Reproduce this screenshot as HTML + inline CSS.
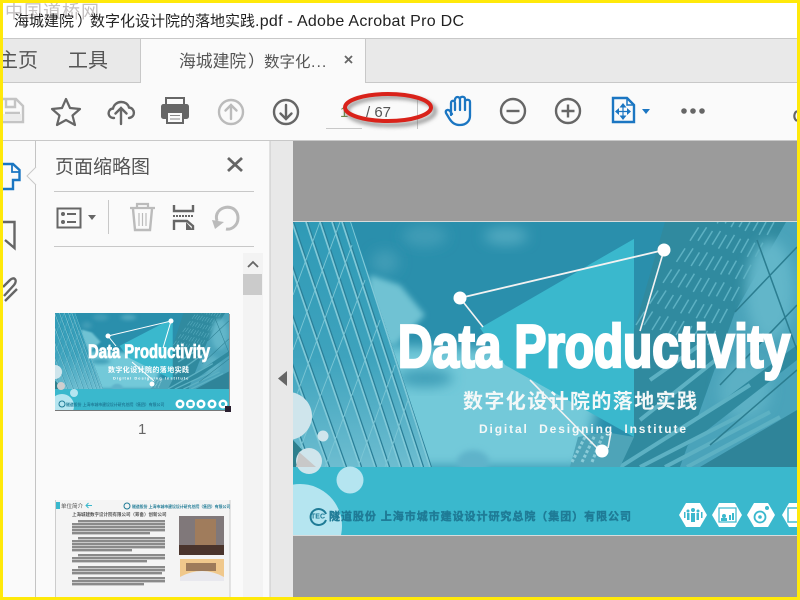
<!DOCTYPE html>
<html><head><meta charset="utf-8"><style>
html,body{margin:0;padding:0;width:800px;height:600px;overflow:hidden;background:#fafafa}
svg{display:block}
text{font-family:"Liberation Sans","Noto Sans CJK SC",sans-serif}
</style></head><body>
<svg width="800" height="600" viewBox="0 0 800 600" xmlns="http://www.w3.org/2000/svg">
<defs>
<filter id="b3" x="-50%" y="-50%" width="200%" height="200%"><feGaussianBlur stdDeviation="3"/></filter>
<filter id="b6" x="-50%" y="-50%" width="200%" height="200%"><feGaussianBlur stdDeviation="6"/></filter>
<filter id="b12" x="-50%" y="-50%" width="200%" height="200%"><feGaussianBlur stdDeviation="12"/></filter>
<filter id="sh" x="-20%" y="-50%" width="140%" height="200%"><feGaussianBlur stdDeviation="2"/></filter>
<linearGradient id="bld" x1="0" y1="0" x2="0" y2="1"><stop offset="0" stop-color="#2f9ab6"/><stop offset=".55" stop-color="#3ea3bd"/><stop offset="1" stop-color="#6dbdd0"/></linearGradient>
<clipPath id="slide"><rect x="293" y="222" width="504" height="313"/></clipPath>
<clipPath id="photo"><rect x="293" y="222" width="504" height="245"/></clipPath>
<clipPath id="bclip"><path d="M293 222H351L432 467H293Z"/></clipPath>
<clipPath id="thumb"><rect x="55" y="313" width="174" height="97"/></clipPath>
</defs>

<rect width="800" height="600" fill="#fafafa"/>
<!-- title -->
<rect x="0" y="0" width="800" height="39" fill="#fff"/>
<text x="5" y="18" font-size="18" fill="#c4c0c0" letter-spacing="1">中国道桥网</text>
<text x="14" y="26" font-size="15" fill="#222">海城建院</text>
<text x="77" y="26" font-size="15" fill="#222">）</text>
<text x="90" y="26" font-size="15" fill="#222">数字化设计院的落地实践</text>
<text x="255" y="26" font-size="16" fill="#222" textLength="209" lengthAdjust="spacing">.pdf - Adobe Acrobat Pro DC</text>
<!-- tabs -->
<rect x="0" y="38" width="800" height="45" fill="#e9e9e9"/>
<rect x="0" y="38" width="800" height="1" fill="#c8c8c8"/>
<rect x="0" y="82" width="800" height="1" fill="#c8c8c8"/>
<rect x="140" y="38" width="226" height="45" fill="#fafafa"/>
<rect x="140" y="38" width="1" height="45" fill="#c8c8c8"/>
<rect x="365" y="38" width="1" height="45" fill="#c8c8c8"/>
<rect x="140" y="38" width="226" height="1" fill="#c8c8c8"/>
<text x="-2" y="67" font-size="20" fill="#555">主页</text>
<text x="68" y="67" font-size="20" fill="#555">工具</text>
<text x="179" y="67" font-size="16.800" fill="#555">海城建院</text>
<text x="248" y="67" font-size="16.800" fill="#555">）</text>
<text x="264" y="67" font-size="15.500" fill="#555">数字化</text>
<text x="311" y="67" font-size="16" fill="#555" letter-spacing="1">...</text>
<path d="M345 56l7 7M352 56l-7 7" stroke="#666" stroke-width="1.800" fill="none"/>

<!-- toolbar -->
<g fill="none" stroke="#c4c4c4" stroke-width="2.400">
<path d="M3 99H16L23 106V122H3"/><path d="M6 100V107H15V100M5 113H20"/>
</g>
<rect x="3" y="114" width="18" height="7" fill="#ececec"/>
<path d="M66 99L70 108L80 109L72.500 115.500L75 125L66 120L57 125L59.500 115.500L52 109L62 108Z" fill="none" stroke="#666" stroke-width="2.200" stroke-linejoin="round"/>
<path d="M114 118C107 118 107 109 113 108.500C115 100 127 100 129 107.500C135 108 136 117 129 118" fill="none" stroke="#666" stroke-width="2.400" stroke-linecap="round"/>
<path d="M121 124V108M115.500 113.500L121 108L126.500 113.500" fill="none" stroke="#666" stroke-width="2.400" stroke-linecap="round"/>
<path d="M166 98H184V105H166Z" fill="none" stroke="#666" stroke-width="2"/>
<rect x="161" y="104" width="28" height="15" rx="2.500" fill="#666"/>
<rect x="167" y="112" width="16" height="11" fill="#fafafa" stroke="#666" stroke-width="2"/>
<path d="M170 115.500H180M170 119H180" stroke="#888" stroke-width="1"/>
<g fill="none" stroke="#bbb" stroke-width="2.400" stroke-linecap="round"><circle cx="231" cy="112" r="12"/><path d="M231 119V105M225.500 110.500L231 105L236.500 110.500"/></g>
<g fill="none" stroke="#666" stroke-width="2.400" stroke-linecap="round"><circle cx="286" cy="112" r="12"/><path d="M286 105V119M280.500 113.500L286 119L291.500 113.500"/></g>
<text x="340" y="117" font-size="15" fill="#6b8a4a">1</text>
<rect x="326" y="128" width="36" height="1" fill="#c8c8c8"/>
<text x="366" y="117" font-size="15" fill="#555">/ 67</text>
<rect x="417" y="97" width="1" height="32" fill="#c4c4c4"/>
<ellipse cx="391" cy="111" rx="44" ry="14" fill="none" stroke="#777" stroke-width="3" filter="url(#sh)"/>
<ellipse cx="388" cy="107.500" rx="43" ry="13.500" fill="none" stroke="#d9221a" stroke-width="4"/>
<path d="M451 115V103C451 100 455 100 455 103V110M455 100C455 96 460 96 460 100V110M460 99C460 96 465 96 465 99V110M465 102C465 99 470 99 470 102V116C470 121 466 125 460 125C455 125 452 123 449 118L446 113C445 110 448 109 450 111L452 114" fill="none" stroke="#1b76c2" stroke-width="2.300" stroke-linecap="round" stroke-linejoin="round"/>
<g fill="none" stroke="#666" stroke-width="2.400"><circle cx="513" cy="111" r="12"/><path d="M506.500 111H519.500"/><circle cx="568" cy="111" r="12"/><path d="M561.500 111H574.500M568 104.500V117.500"/></g>
<path d="M613 98H627L634 105V122H613Z" fill="none" stroke="#1b76c2" stroke-width="2.400"/>
<path d="M627 98V105H634" fill="none" stroke="#1b76c2" stroke-width="1.500"/>
<path d="M623 103L619.500 107.500H626.500ZM623 120L619.500 115.500H626.500ZM615 111.500L619 108V115ZM631 111.500L627 108V115Z" fill="#1b76c2"/>
<path d="M623 106V117M617 111.500H629" stroke="#1b76c2" stroke-width="1.200"/>
<path d="M642 109H650L646 114Z" fill="#1b76c2"/>
<circle cx="684" cy="111" r="2.800" fill="#666"/><circle cx="693" cy="111" r="2.800" fill="#666"/><circle cx="702" cy="111" r="2.800" fill="#666"/>
<path d="M797 111A6 6 0 0 0 797 121" fill="none" stroke="#666" stroke-width="2.200"/>

<rect x="0" y="140" width="800" height="1" fill="#c8c8c8"/>

<!-- left nav and panel -->
<rect x="35" y="141" width="1" height="459" fill="#c4c4c4"/>
<path d="M36 167L27 176L36 185" fill="#fafafa" stroke="#c8c8c8" stroke-width="1"/>
<rect x="36" y="168" width="1" height="16" fill="#fafafa"/>
<path d="M3 164H13L19.500 170V180H13V189H3" fill="none" stroke="#1b76c2" stroke-width="2.400"/>
<path d="M12 164V172H19" fill="none" stroke="#1b76c2" stroke-width="1.800"/>
<path d="M3 222H14.500V248L5 240" fill="none" stroke="#666" stroke-width="2.400"/>
<path d="M4 296L14 285C18 280 14 276 10 280L3 287M5 301L17 289" fill="none" stroke="#666" stroke-width="2.400"/>

<text x="55" y="173" font-size="19" fill="#555">页面缩略图</text>
<path d="M228 158L242 171M242 158L228 171" stroke="#666" stroke-width="2.800" fill="none"/>
<rect x="54" y="191" width="200" height="1" fill="#c8c8c8"/>
<rect x="54" y="246" width="200" height="1" fill="#c8c8c8"/>
<rect x="57.500" y="208.500" width="23" height="19" fill="none" stroke="#666" stroke-width="2"/>
<circle cx="63" cy="214" r="2" fill="#666"/><circle cx="63" cy="222" r="2" fill="#666"/>
<path d="M67 214H76M67 222H76" stroke="#666" stroke-width="2"/>
<path d="M88 215H96L92 220Z" fill="#666"/>
<rect x="108" y="200" width="1" height="34" fill="#c8c8c8"/>
<path d="M130 208H155M137 208V204H148V208" fill="none" stroke="#bbb" stroke-width="2.200"/>
<path d="M133 209L135 230H150L152 209" fill="none" stroke="#bbb" stroke-width="2.400"/>
<path d="M139 213V226M142.500 213V226M146 213V226" stroke="#bbb" stroke-width="1.200"/>
<path d="M174 205V211H193V205" fill="none" stroke="#666" stroke-width="2.400"/>
<path d="M173 216H194" stroke="#666" stroke-width="2" stroke-dasharray="2 1"/>
<path d="M174 230V221H187L193 226V230" fill="none" stroke="#666" stroke-width="2.400"/>
<path d="M186 222L193 230H186Z" fill="#666"/>
<path d="M218 212C224 204 238 206 238 218C238 226 231 230 226 229" fill="none" stroke="#bbb" stroke-width="3"/>
<path d="M218 212C216 215 216 218 217 221" fill="none" stroke="#bbb" stroke-width="3"/>
<path d="M212 220L224 222L215 229Z" fill="#bbb"/>

<!-- scrollbar -->
<rect x="243" y="253" width="20" height="347" fill="#f3f3f3"/>
<rect x="243" y="274" width="19" height="21" fill="#cbcbcb"/>
<path d="M248 267L253 262L258 267" fill="none" stroke="#666" stroke-width="1.800"/>

<!-- thumbnail 1 -->
<rect x="56" y="314" width="174" height="97" fill="#999"/>
<g clip-path="url(#thumb)">
<rect x="55" y="313" width="174" height="97" fill="#3ab8cd"/>
<use href="#art" transform="translate(55,313) scale(.3452,.3102) translate(-293,-222)"/>
<path d="M108 336L171 321L163 348M108 336L116 346M154 381L132 362" stroke="#fff" stroke-width="1" fill="none"/>
<circle cx="108" cy="336" r="2.500" fill="#fff"/><circle cx="171" cy="321" r="2.500" fill="#fff"/><circle cx="152" cy="384" r="2.500" fill="#fff"/>
<text x="88" y="358" font-size="19" font-weight="bold" fill="#fff" stroke="#fff" stroke-width=".8" textLength="122" lengthAdjust="spacingAndGlyphs">Data Productivity</text>
<text x="108" y="372" font-size="7" font-weight="bold" fill="#fff" letter-spacing=".4">数字化设计院的落地实践</text>
<text x="113" y="379.500" font-size="4" font-weight="bold" fill="#fff" letter-spacing="1">Digital Designing Institute</text>
<circle cx="55" cy="372" r="7" fill="#cfe5ec"/><circle cx="61" cy="386" r="4" fill="#cfcfcf"/><circle cx="74" cy="393" r="4" fill="#b5e5f0"/><circle cx="62" cy="406" r="12" fill="#b5e5f0"/>
<circle cx="62" cy="404" r="3" fill="none" stroke="#1f7b96"/>
<text x="66" y="406" font-size="3.900" font-weight="bold" fill="#1f7b96">隧道股份 上海市城市建设设计研究总院（集团）有限公司</text>
<g fill="#fff"><circle cx="180" cy="404" r="4.500"/><circle cx="190.500" cy="404" r="4.500"/><circle cx="201" cy="404" r="4.500"/><circle cx="212" cy="404" r="4.500"/><circle cx="223" cy="404" r="4.500"/></g>
<g fill="#3ab8cd"><circle cx="180" cy="404" r="2"/><rect x="188.500" y="402" width="4" height="4"/><circle cx="201" cy="404" r="2"/><circle cx="212" cy="404" r="2"/><circle cx="223" cy="404" r="2"/></g>
</g>
<rect x="55" y="410" width="174" height="1" fill="#777"/>
<rect x="225" y="406" width="6" height="6" fill="#2a2030"/>
<text x="138" y="434" font-size="15" fill="#666">1</text>

<!-- thumbnail 2 -->
<rect x="55" y="500" width="175" height="97" fill="#f4f4f4"/>
<rect x="229.500" y="500" width="1" height="97" fill="#ccc"/><rect x="55" y="500" width="1" height="97" fill="#ccc"/>
<rect x="56" y="502" width="4" height="7" fill="#3ab8cd"/>
<text x="61" y="508" font-size="5.500" fill="#555">单位简介</text>
<path d="M92 505.500H86M88.500 503L86 505.500L88.500 508" stroke="#3ab8cd" stroke-width="1" fill="none"/>
<circle cx="127" cy="506" r="3" fill="none" stroke="#1f7b96"/>
<text x="132" y="508" font-size="3.900" font-weight="bold" fill="#1f7b96">隧道股份 上海市城市建设设计研究总院（集团）有限公司</text>
<text x="72" y="516" font-size="4.500" font-weight="bold" fill="#555">上海城建数字设计院有限公司（筹备）创新公司</text>
<g fill="#8a8a8a">
<rect x="78" y="520" width="87" height="2.400"/><rect x="72" y="523" width="93" height="2.400"/><rect x="72" y="526" width="93" height="2.400"/><rect x="72" y="529" width="93" height="2.400"/><rect x="72" y="532" width="78" height="2.400"/>
<rect x="78" y="537" width="87" height="2.400"/><rect x="72" y="540" width="93" height="2.400"/><rect x="72" y="543" width="93" height="2.400"/><rect x="72" y="546" width="93" height="2.400"/><rect x="72" y="549" width="60" height="2.400"/>
<rect x="78" y="554" width="87" height="2.400"/><rect x="72" y="557" width="93" height="2.400"/><rect x="72" y="560" width="75" height="2.400"/>
<rect x="78" y="566" width="87" height="2.400"/><rect x="72" y="569" width="93" height="2.400"/><rect x="72" y="572" width="90" height="2.400"/>
<rect x="78" y="577" width="87" height="2.400"/><rect x="72" y="580" width="93" height="2.400"/><rect x="72" y="583" width="72" height="2.400"/>
</g>
<rect x="179" y="516" width="45" height="39" fill="#80787a"/>
<rect x="195" y="519" width="21" height="30" fill="#a07c5c"/>
<rect x="179" y="545" width="45" height="10" fill="#4a342c"/>
<rect x="180" y="559" width="44" height="22" fill="#f0c88c"/>
<path d="M180 577Q202 565 224 577V581H180Z" fill="#e8e8ee"/>
<path d="M186 563H216V571H186Z" fill="#7a5a44" opacity=".7"/>

<!-- gutter and page area -->
<rect x="270" y="141" width="23" height="459" fill="#e8e8e8"/>
<rect x="269.500" y="141" width="1" height="459" fill="#c8c8c8"/>
<path d="M287 371L278 378.500L287 386Z" fill="#666"/>
<rect x="293" y="141" width="507" height="459" fill="#9b9b9b"/>

<!-- slide -->
<rect x="293" y="221" width="504" height="315" fill="#d8dcdc"/>
<g clip-path="url(#slide)">
<rect x="293" y="222" width="504" height="245" fill="#3ab8cd"/>
<g id="art" clip-path="url(#photo)">
<rect x="293" y="222" width="504" height="245" fill="#2a8fac"/>
<!-- clouds -->
<ellipse cx="425" cy="236" rx="22" ry="11" fill="#3f9cb6" filter="url(#b6)"/>
<ellipse cx="506" cy="236" rx="22" ry="9" fill="#50a8bf" filter="url(#b6)"/>
<ellipse cx="385" cy="262" rx="14" ry="12" fill="#3f9cb6" filter="url(#b6)"/>
<path d="M370 275L400 285L425 315L395 345L365 340Z" fill="#6fc2d3" filter="url(#b3)"/>
<path d="M360 345L520 350L600 400L580 467H400Z" fill="#73c9d9" filter="url(#b6)"/>
<ellipse cx="425" cy="378" rx="28" ry="9" fill="#3f9fb8" filter="url(#b6)"/>
<ellipse cx="473" cy="462" rx="16" ry="12" fill="#5fb3ca" filter="url(#b3)"/>
<!-- left building -->
<path d="M293 222H351L432 467H293Z" fill="url(#bld)"/>
<g clip-path="url(#bclip)">
<g stroke="#2a7f98" stroke-width="1.400" fill="none" transform="translate(1.500,0)">
<path d="M351 222L430 467M342 222L422 467M332 222L412 467M320 222L400 467M306 222L388 467M292 222L375 467M276 222L360 467M258 222L345 467M240 222L328 467M220 222L310 467M198 222L290 467M175 222L270 467"/>
</g>
<g stroke="#80c9d8" stroke-width="1.700" fill="none">
<path d="M351 222L430 467M342 222L422 467M332 222L412 467M320 222L400 467M306 222L388 467M292 222L375 467M276 222L360 467M258 222L345 467M240 222L328 467M220 222L310 467M198 222L290 467M175 222L270 467"/>
</g>
<g stroke="#7cc6d5" stroke-width=".9" fill="none">
<path d="M320 222L293 295M340 222L293 350M352 245L293 405M365 280L293 467M380 320L325 467M395 365L358 467M408 400L385 467"/>
</g>
</g>
<path d="M293 440L318 467H293Z" fill="#2e7f8d"/>
<!-- right building -->
<path d="M665 222H786L735 312L680 467H590L634 437V330Z" fill="#308a9f"/>
<path d="M786 222H797V467H680L735 312Z" fill="#4aa3ba"/>
<ellipse cx="770" cy="290" rx="24" ry="50" fill="#62b6c9" filter="url(#b6)"/>
<ellipse cx="745" cy="390" rx="26" ry="30" fill="#5bb0c4" filter="url(#b6)"/>
<path d="M700 467L797 410V467Z" fill="#2f8499"/>
<path d="M634 467L797 345V360L660 467Z" fill="#308a9f"/>
<g stroke="#5db1c3" stroke-width="1.500" fill="none" stroke-dasharray="16 9">
<path d="M636 325L702 222M644 325L710 222M652 330L718 222M660 330L726 222M668 335L734 222M676 335L742 222M684 340L750 222M692 340L758 222M700 345L766 222M708 345L774 222"/>
</g>
<g stroke="#5db1c3" stroke-width="4" fill="none">
<path d="M620 467L750 385M640 467L757 407M665 467L770 412M687 467L780 417M640 420L722 355M650 380L700 345"/>
</g>
<g stroke="#2b7d90" stroke-width="1.500" fill="none">
<path d="M757 240L797 350M797 247L735 312M797 305L720 385M797 370L710 445"/>
</g>
<path d="M634 239L480 328L505 365L634 437Z" fill="#3ab8cd"/>
<path d="M570 467L578 437L605 432L634 437L620 467Z" fill="#4ea4b8"/>
<path d="M572 462L585 437M582 462L595 435M592 462L603 435" stroke="#8acbd8" stroke-width="3" stroke-dasharray="3 2" fill="none"/>
</g>
<path d="M460 298L664 250" stroke="#f2f2f2" stroke-width="1.800"/>
<path d="M634 239L587 266L634 255Z" fill="#3ab8cd"/>
<path d="M664 250L640 331M460 298L483 327M600 451L530 380M608 448L611 432" stroke="#f2f2f2" stroke-width="1.600" fill="none"/>
<circle cx="460" cy="298" r="6.500" fill="#fff"/><circle cx="664" cy="250" r="6.500" fill="#fff"/><circle cx="602" cy="451" r="6.500" fill="#fff"/>
<text x="398" y="367" font-size="60" font-weight="bold" fill="#fff" stroke="#fff" stroke-width="2.800" textLength="392" lengthAdjust="spacingAndGlyphs">Data Productivity</text>
<text x="463" y="408" font-size="20" font-weight="bold" fill="#f4f8f8" letter-spacing="1.400">数字化设计院的落地实践</text>
<text x="479" y="433" font-size="12" font-weight="bold" fill="#f4f8f8" textLength="207" xml:space="preserve">Digital  Designing  Institute</text>
<rect x="293" y="467" width="504" height="68" fill="#3ab8cd"/>
<circle cx="288" cy="416" r="24" fill="#cfe5ec"/>
<circle cx="323" cy="436" r="5.500" fill="#cfe5ec"/>
<circle cx="309" cy="461" r="13" fill="#cfe5ec"/>
<path d="M299 452L316 467L296 467Z" fill="#c8c8c8"/>
<circle cx="350" cy="480" r="13.500" fill="#b5e5f0"/>
<circle cx="300" cy="526" r="42" fill="#b5e5f0"/>
<path d="M326 514A8 8 0 1 0 326 520" fill="none" stroke="#1f7b96" stroke-width="2"/>
<text x="311" y="518.500" font-size="7" font-weight="bold" fill="#1f7b96">TEC</text>
<text x="329" y="520" font-size="11" font-weight="bold" fill="#1f7b96" stroke="#1f7b96" stroke-width=".4" textLength="302">隧道股份 上海市城市建设设计研究总院（集团）有限公司</text>
<g fill="#fff">
<path d="M679 515L686 503H700L707 515L700 527H686Z"/>
<path d="M712 515L719 503H735L742 515L735 527H719Z"/>
<path d="M747 515L754 503H768L775 515L768 527H754Z"/>
<path d="M782 515L789 503H805L812 515L805 527H789Z"/>
</g>
<g fill="#3ab8cd">
<circle cx="693" cy="510" r="2"/><rect x="691" y="513" width="4" height="9"/><circle cx="688" cy="511" r="1.500"/><rect x="687" y="513" width="2.500" height="7"/><circle cx="698" cy="511" r="1.500"/><rect x="696.500" y="513" width="2.500" height="7"/><rect x="684" y="512" width="1.500" height="6"/><rect x="701" y="512" width="1.500" height="6"/>
<rect x="719" y="508" width="17" height="14" fill="none" stroke="#3ab8cd" stroke-width="1.200"/><circle cx="724" cy="516" r="2"/><rect x="721" y="518" width="6" height="3"/><rect x="729" y="515" width="2" height="5"/><rect x="732" y="513" width="2" height="7"/>
<circle cx="760" cy="517" r="5.500" fill="none" stroke="#3ab8cd" stroke-width="1.800"/><circle cx="760" cy="517" r="1.800"/><circle cx="767" cy="508" r="2"/>
<rect x="788" y="508" width="10" height="14" fill="none" stroke="#3ab8cd" stroke-width="1.400"/>
</g>
</g>

<!-- yellow frame -->
<rect x="0" y="0" width="800" height="3" fill="#ffe90a"/>
<rect x="0" y="597" width="800" height="3" fill="#ffe90a"/>
<rect x="0" y="0" width="3" height="600" fill="#ffe90a"/>
<rect x="797" y="0" width="3" height="600" fill="#ffe90a"/>
</svg>
</body></html>
